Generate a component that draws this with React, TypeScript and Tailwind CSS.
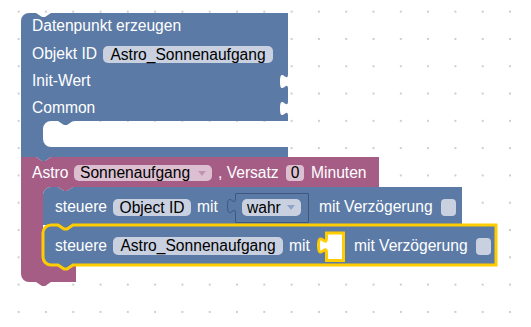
import type { ReactNode } from "react";

const BLUE = "#5b7aa6";
const PINK = "#a55d86";

function BlockShapes() {
  return (
    <svg className="absolute inset-0" width={531} height={327}>
      {/* Datenpunkt erzeugen */}
      <path
        fill={BLUE}
        d="M21,21 a8,8 0 0 1 8,-8 H36 l6,4 3,0 6,-4 H288 V74 c0,10 -8,-8 -8,7.5 s8,-2.5 8,7.5 V101 c0,10 -8,-8 -8,7.5 s8,-2.5 8,7.5 V121 H73 l-6,4 -3,0 -6,-4 H51 a8,8 0 0 0 -8,8 V139 a8,8 0 0 0 8,8 H288 V157 H51 l-6,4 -3,0 -6,-4 H21 Z"
      />
      {/* Astro trigger */}
      <path
        fill={PINK}
        d="M21,157 H36 l6,4 3,0 6,-4 H379 V187 H73 l-6,4 -3,0 -6,-4 H51 a8,8 0 0 0 -8,8 V257 a8,8 0 0 0 8,8 H76 V282 H51 l-6,4 -3,0 -6,-4 H29 a8,8 0 0 1 -8,-8 Z"
      />
      {/* steuere Object ID */}
      <path
        fill={BLUE}
        d="M43,195 a8,8 0 0 1 8,-8 H58 l6,4 3,0 6,-4 H462 V225 H73 l-6,4 -3,0 -6,-4 H43 Z"
      />
      {/* wahr */}
      <path
        fill={BLUE}
        stroke="#3f5680"
        strokeWidth={1}
        d="M235.5,193.5 H308.5 V222.5 H235.5 V213.5 c0,-10 -8,8 -8,-7.5 s8,2.5 8,-7.5 Z"
      />
      {/* steuere Astro_Sonnenaufgang (selected) */}
      <path
        fill={BLUE}
        fillRule="evenodd"
        stroke="#fc0"
        strokeWidth={3}
        d="M43,233 a8,8 0 0 1 8,-8 H58 l6,4 3,0 6,-4 H496 V265 H73 l-6,4 -3,0 -6,-4 H51 a8,8 0 0 1 -8,-8 Z M326.5,233 v5 c0,10 -8,-8 -8,7.5 s8,-2.5 8,7.5 V260.5 H343.5 V233 Z"
      />
    </svg>
  );
}

function Row({ left, top, children }: { left: number; top: number; children: ReactNode }) {
  return (
    <div
      className="absolute flex h-[18px] items-center whitespace-nowrap text-[15.6px] leading-[18px] text-white"
      style={{ left, top }}
    >
      {children}
    </div>
  );
}

function Arrow({ color }: { color: string }) {
  return (
    <svg width={8} height={5} className="shrink-0">
      <path d="M0 0H8L4 5Z" fill={color} />
    </svg>
  );
}

export default function App() {
  return (
    <div
      className="relative h-[327px] w-[531px] overflow-hidden bg-white bg-[radial-gradient(circle,#cdcdcd_1px,transparent_1.4px)] bg-[length:27.3px_27.3px] bg-[position:5px_-2px]"
      style={{ fontFamily: '"Liberation Sans", Arial, sans-serif' }}
    >
      <BlockShapes />

      <Row left={32} top={17}>
        <span>Datenpunkt erzeugen</span>
      </Row>
      <Row left={32} top={45}>
        <span className="w-[71px]">Objekt ID</span>
        <span className="flex h-[17px] w-[170px] items-center justify-center rounded-[5px] bg-[#c9d1e1] leading-[17px] text-black">
          Astro_Sonnenaufgang
        </span>
      </Row>
      <Row left={32} top={72}>
        <span>Init-Wert</span>
      </Row>
      <Row left={32} top={99}>
        <span>Common</span>
      </Row>

      <Row left={32} top={164}>
        <span className="w-[42px]">Astro</span>
        <span className="flex h-[16px] w-[138px] items-center gap-[8px] rounded-[5px] bg-[#dcc0d2] pl-[6px] leading-[16px] text-black">
          Sonnenaufgang
          <Arrow color="#c293b0" />
        </span>
        <span className="w-[74px] pl-[6px]">, Versatz</span>
        <span className="flex h-[16px] w-[18px] items-center justify-center rounded-[4px] bg-[#dcc0d2] leading-[16px] text-black">
          0
        </span>
        <span className="pl-[7px]">Minuten</span>
      </Row>

      <Row left={55} top={198}>
        <span className="w-[58px]">steuere</span>
        <span className="flex h-[17px] w-[78px] items-center justify-center rounded-[5px] bg-[#c9d1e1] leading-[17px] text-black">
          Object ID
        </span>
        <span className="w-[51px] pl-[6px]">mit</span>
        <span className="flex h-[17px] w-[59px] items-center gap-[6px] rounded-[5px] bg-[#c9d1e1] pl-[5px] leading-[17px] text-black">
          wahr
          <Arrow color="#8ea3c6" />
        </span>
        <span className="w-[18px]" />
        <span className="w-[122px]">mit Verzögerung</span>
        <span className="h-[17px] w-[15px] rounded-[4px] bg-[#c9d1e1]" />
      </Row>

      <Row left={55} top={237}>
        <span className="w-[58px]">steuere</span>
        <span className="flex h-[18px] w-[170px] items-center justify-center rounded-[5px] bg-[#c9d1e1] leading-[18px] text-black">
          Astro_Sonnenaufgang
        </span>
        <span className="w-[71px] pl-[6px]">mit</span>
        <span className="w-[122px]">mit Verzögerung</span>
        <span className="h-[17px] w-[15px] rounded-[4px] bg-[#c9d1e1]" />
      </Row>
    </div>
  );
}
